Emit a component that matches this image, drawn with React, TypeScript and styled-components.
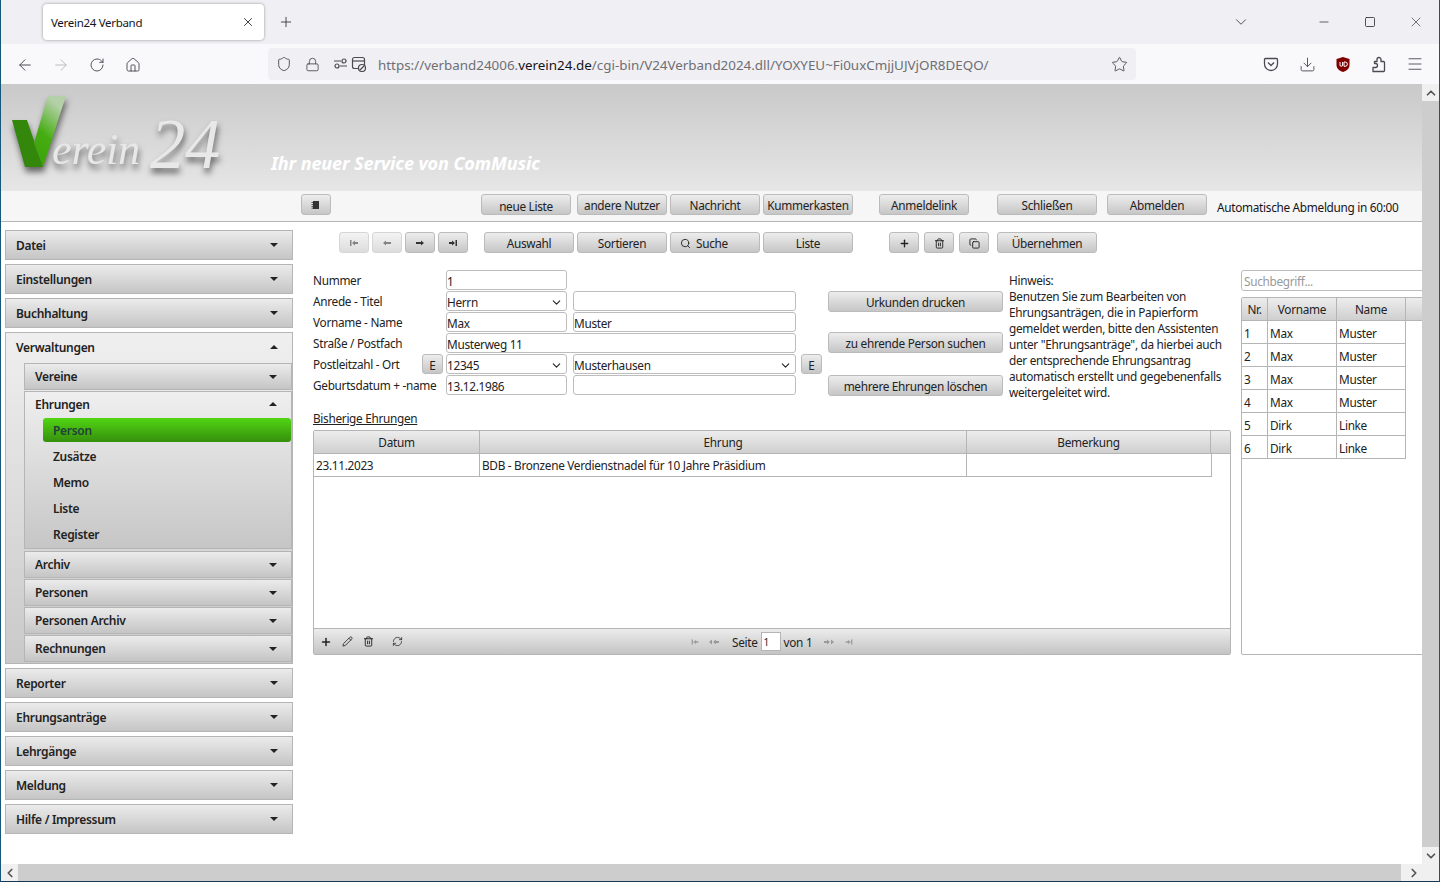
import { Fragment } from 'react';
import styled, { createGlobalStyle } from 'styled-components';
import {
  ArrowLeft, ArrowRight, RotateCw, House, Shield, Lock, Star, Download, Menu,
  ChevronDown, ChevronUp, ChevronLeft, ChevronRight, X, Plus, Minus, Square, Search, Trash2, Copy, Pencil, RefreshCw,
} from 'lucide-react';

const UI_FONT = '"Noto Sans", "Open Sans", sans-serif';
const BORDER = '#b5b5b5';

const GlobalStyle = createGlobalStyle`
  html, body { margin: 0; padding: 0; height: 100%; overflow: hidden; background: #fff; }
  body { font-family: ${UI_FONT}; font-size: 11.8px; letter-spacing: -0.3px; color: #222; }
  #root { height: 882px; }
  * { box-sizing: border-box; }
`;

const Glyph = ({ d, size = 12, color = '#333' }: { d: string; size?: number; color?: string }) => (
  <svg width={size} height={size} viewBox="0 0 12 12" fill={color}><path d={d} /></svg>
);

const GLYPHS = {
  first: 'M2 3h1.5v6H2zM4 6l3-2.500V5h3v2H7v1.500z',
  prev: 'M2 6l3-2.500V5h5v2H5v1.500z',
  next: 'M10 6L7 3.500V5H2v2h5v1.500z',
  last: 'M10 3H8.500v6H10zM8 6L5 3.500V5H2v2h3v1.500z',
  list: 'M3 2h6v8H3zM1.500 3H3v.8H1.500zM1.500 5H3v.8H1.500zM1.500 7H3v.8H1.500zM1.500 8.800H3v.8H1.500z',
  seekPrev: 'M1 6l3-2.500v5zM5 6l3-2.500v5zM8 5h3v2H8z',
  seekNext: 'M11 6L8 3.500v5zM7 6L4 3.500v5zM1 5h3v2H1z',
};

const Shell = styled.div`
  height: 882px;
  display: flex;
  flex-direction: column;
  border-left: 1px solid #17587a;
  border-right: 1px solid #17587a;
  border-bottom: 1px solid #17384f;
`;

const TabStrip = styled.div`
  height: 44px;
  flex: none;
  background: #f0f0f4;
  display: flex;
  align-items: center;
  color: #333;
`;

const Tab = styled.div`
  width: 221px;
  height: 36px;
  margin: 0 0 0 42px;
  padding: 0 9px 0 8px;
  border-radius: 4px;
  background: #fff;
  box-shadow: 0 0 3px rgba(0, 0, 0, 0.4);
  display: flex;
  align-items: center;
  justify-content: space-between;
  font-size: 11.5px;
  color: #15141a;
`;

const NewTab = styled.div`
  margin-left: 14px;
  display: flex;
`;

const WindowControls = styled.div`
  margin-left: auto;
  display: flex;
  align-items: center;
`;

const WindowIcon = styled.span<{ $w: number }>`
  width: ${(p) => p.$w}px;
  display: flex;
  justify-content: center;
`;

const NavBar = styled.div`
  height: 40px;
  flex: none;
  background: #f9f9fb;
  display: flex;
  align-items: center;
  padding-left: 6px;
  color: #4b4a50;
`;

const NavGroup = styled.div`
  display: flex;
  padding-top: 2px;
`;

const NavIcon = styled.span<{ $faded?: boolean }>`
  width: 36px;
  display: flex;
  align-items: center;
  justify-content: center;
  opacity: ${(p) => (p.$faded ? 0.35 : 1)};
`;

const UrlBar = styled.div`
  width: 868px;
  height: 32px;
  margin-left: 117px;
  border-radius: 4px;
  background: #f0f0f4;
  display: flex;
  align-items: center;
  padding: 0 8px;
  gap: 13px;
`;

const UrlText = styled.div`
  flex: 1;
  margin-left: -2px;
  padding-top: 2px;
  font-size: 13.4px;
  letter-spacing: 0;
  color: #6f6e73;
  white-space: nowrap;
  b { font-weight: 400; color: #15141a; }
`;

const NavEnd = styled.div`
  margin-left: auto;
  display: flex;
  align-items: center;
  padding-right: 6px;
`;

const Viewport = styled.div`
  flex: 1;
  min-height: 0;
  display: grid;
  grid-template-columns: 1fr 17px;
  grid-template-rows: 1fr 17px;
`;

const Page = styled.div`
  overflow: hidden;
  background: #fff;
  min-width: 0;
`;

const ScrollTrack = styled.div<{ $horizontal?: boolean }>`
  background: #f0f0f0;
  display: flex;
  flex-direction: ${(p) => (p.$horizontal ? 'row' : 'column')};
  color: #555;
`;

const ScrollThumb = styled.div<{ $horizontal?: boolean }>`
  flex: 1;
  background: #cdcdcd;
  ${(p) => p.$horizontal && 'margin-right: 4px;'}
`;

const ScrollArrow = styled.span`
  width: 17px;
  height: 17px;
  flex: none;
  display: flex;
  align-items: center;
  justify-content: center;
`;

const Corner = styled.div`
  background: #f0f0f0;
`;

const Header = styled.div`
  height: 107px;
  background: linear-gradient(#c9c9c9, #e6e6e6);
  position: relative;
`;

const Logo = styled.svg`
  position: absolute;
  left: 8px;
  top: 6px;
  filter: drop-shadow(1px 5px 3px rgba(0, 0, 0, 0.55));
`;

const Slogan = styled.div`
  position: absolute;
  left: 270px;
  top: 67px;
  font-size: 18px;
  font-weight: 700;
  font-style: italic;
  letter-spacing: -0.1px;
  color: #fff;
`;

const TopBar = styled.div`
  height: 31px;
  background: #f6f6f6;
  border-bottom: 1px solid ${BORDER};
  display: flex;
  align-items: flex-start;
  padding: 3px 0 0 300px;
`;

const Btn = styled.button<{ $w?: number; $ml?: number; $off?: boolean; $pt?: number; $pr?: number }>`
  width: ${(p) => p.$w ?? 90}px;
  height: 21px;
  flex: none;
  margin: 0 0 0 ${(p) => p.$ml ?? 3}px;
  padding: ${(p) => p.$pt ?? 1}px ${(p) => p.$pr ?? 0}px 0 0;
  border: 1px solid #bbb;
  border-radius: 3px;
  background: linear-gradient(#ededed, #c6c6c6);
  font: inherit;
  letter-spacing: inherit;
  color: ${(p) => (p.$off ? '#999' : '#222')};
  display: inline-flex;
  align-items: center;
  justify-content: center;
  gap: 5px;
  white-space: nowrap;
  opacity: ${(p) => (p.$off ? 0.6 : 1)};
`;

const LogoutNote = styled.span`
  margin: 5px 0 0 10px;
  color: #15141a;
  white-space: nowrap;
`;

const Main = styled.div`
  display: flex;
  align-items: flex-start;
`;

const Sidebar = styled.nav`
  width: 288px;
  flex: none;
  margin: 8px 0 0 4px;
  display: flex;
  flex-direction: column;
  gap: 4px;
`;

const SideHead = styled.div<{ $sub?: boolean; $open?: boolean }>`
  height: ${(p) => (p.$sub ? (p.$open ? 26 : 27) : 30)}px;
  padding: 0 14px ${(p) => (p.$open ? 2 : 0)}px 10px;
  border: ${(p) => (p.$open ? '0' : `1px solid ${BORDER}`)};
  background: ${(p) => (p.$open ? 'transparent' : 'linear-gradient(#ebebeb, #c5c5c5)')};
  display: flex;
  align-items: center;
  justify-content: space-between;
  font-size: 12px;
  font-weight: 600;
  color: #222;
`;

const Caret = styled.i<{ $up?: boolean }>`
  width: 0;
  height: 0;
  border-left: 4px solid transparent;
  border-right: 4px solid transparent;
  ${(p) => (p.$up ? 'border-bottom: 4px solid #222;' : 'border-top: 4px solid #222;')}
`;

const OpenPanel = styled.div`
  height: 332px;
  border: 1px solid ${BORDER};
  background: linear-gradient(#efefef, #c9c9c9);
`;

const SubList = styled.div`
  margin-left: 18px;
  display: flex;
  flex-direction: column;
  gap: 1px;
`;

const SubOpen = styled.div`
  height: 158px;
  margin-bottom: 1px;
  border: 1px solid ${BORDER};
  background: linear-gradient(#efefef, #c6c6c6);
`;

const LeafList = styled.div`
  padding-left: 18px;
  display: flex;
  flex-direction: column;
`;

const Leaf = styled.div<{ $active?: boolean }>`
  height: 26px;
  padding-left: 10px;
  display: flex;
  align-items: center;
  font-size: 12px;
  font-weight: 600;
  color: #222;
  ${(p) => p.$active && `
    height: 24px;
    margin-bottom: 1px;
    border-radius: 3px;
    background: linear-gradient(#52d514, #368f0c);
    color: #21413a;
  `}
`;

const Content = styled.div`
  position: relative;
  width: 1128px;
  height: 640px;
  flex: none;
  padding: 10px 0 0 20px;
`;

const Toolbar = styled.div`
  display: flex;
  padding-left: 26px;
`;

const Upper = styled.div`
  display: flex;
  align-items: flex-start;
  height: 127px;
  margin-top: 17px;
`;

const FormGrid = styled.div`
  width: 515px;
  flex: none;
  display: grid;
  grid-template-columns: 109px 24px 127px 228px 21px;
  grid-auto-rows: 21px;
`;

const Label = styled.label<{ $wide?: boolean }>`
  grid-column: ${(p) => (p.$wide ? '1 / span 2' : '1')};
  display: flex;
  align-items: center;
  height: 20px;
  color: #222;
  white-space: nowrap;
`;

const inputBase = `
  height: 20px;
  border: 1px solid #bdbdbd;
  border-radius: 3px;
  background: #fff;
  padding: 2px 0 0;
  display: flex;
  align-items: center;
  color: #222;
  white-space: nowrap;
  overflow: hidden;
`;

const Field = styled.div<{ $w: number; $col: number; $span?: number }>`
  ${inputBase}
  width: ${(p) => p.$w}px;
  grid-column: ${(p) => p.$col} / span ${(p) => p.$span ?? 1};
`;

const SelectField = styled(Field)`
  justify-content: space-between;
  padding-right: 3px;
`;

const SmallE = styled(Btn)`
  grid-column: ${(p) => (p.$ml === 5 ? 5 : 2)};
  width: 21px;
  height: 20px;
  margin: 0;
`;

const ActionColumn = styled.div`
  width: 175px;
  flex: none;
  margin: 21px 0 0 0;
  display: flex;
  flex-direction: column;
`;

const ActionBtn = styled(Btn)<{ $mt?: number }>`
  width: 175px;
  margin: ${(p) => p.$mt ?? 0}px 0 0;
`;

const Hint = styled.div`
  width: 218px;
  flex: none;
  margin: 2px 0 0 6px;
  line-height: 16px;
  color: #222;
`;

const Section = styled.div`
  margin-top: 13px;
  text-decoration: underline;
  line-height: 16px;
`;

const GridBox = styled.div`
  width: 918px;
  height: 225px;
  margin-top: 4px;
  border: 1px solid ${BORDER};
  border-radius: 2px;
  display: flex;
  flex-direction: column;
`;

const GridHead = styled.div`
  height: 23px;
  display: grid;
  grid-template-columns: 166px 487px 244px 1fr;
  background: linear-gradient(#ededed, #cfcfcf);
  border-bottom: 1px solid ${BORDER};
`;

const HeadCell = styled.div`
  display: flex;
  align-items: center;
  justify-content: center;
  border-right: 1px solid ${BORDER};
  &:last-child { border-right: 0; }
`;

const GridRow = styled.div`
  width: 898px;
  height: 23px;
  display: grid;
  grid-template-columns: 166px 487px 244px;
  border-bottom: 1px solid ${BORDER};
  border-right: 1px solid ${BORDER};
`;

const GridCell = styled.div`
  display: flex;
  align-items: center;
  padding-left: 2px;
  border-right: 1px solid ${BORDER};
  &:last-child { border-right: 0; }
`;

const GridSpace = styled.div`
  flex: 1;
`;

const Pager = styled.div`
  height: 26px;
  border-top: 1px solid ${BORDER};
  background: linear-gradient(#ececec, #c4c4c4);
  display: grid;
  grid-template-columns: 374px auto;
  align-items: center;
`;

const PagerLeft = styled.div`
  display: flex;
  align-items: center;
  padding-left: 6px;
  gap: 10px;
`;

const PagerSpin = styled.span`
  display: flex;
  margin-left: 8px;
`;

const PagerCenter = styled.div`
  display: flex;
  align-items: center;
  gap: 3px;
  margin-left: 2px;
`;

const PagerInput = styled.div`
  width: 20px;
  height: 19px;
  border: 1px solid ${BORDER};
  background: #fff;
  padding-left: 2px;
  font-size: 10px;
  line-height: 18px;
`;

const PagerGap = styled.span<{ $w: number }>`
  width: ${(p) => p.$w}px;
`;

const SidePanel = styled.aside`
  position: absolute;
  left: 948px;
  top: 48px;
  width: 181px;
  height: 385px;
  overflow: hidden;
`;

const SearchField = styled.div`
  ${inputBase}
  height: 21px;
  width: 200px;
  color: #999;
  padding: 1px 0 0 2px;
`;

const ListBox = styled.div`
  width: 200px;
  height: 358px;
  margin-top: 6px;
  border: 1px solid ${BORDER};
  border-radius: 2px;
`;

const ListTable = styled.div`
  display: grid;
  grid-template-columns: 26px 69px 69px 1fr;
  grid-auto-rows: 23px;
`;

const ListHead = styled.div`
  background: linear-gradient(#ededed, #cfcfcf);
  border-right: 1px solid ${BORDER};
  border-bottom: 1px solid ${BORDER};
  display: flex;
  align-items: center;
  justify-content: center;
  &:last-child { border-right: 0; }
`;

const ListCell = styled.div`
  border-right: 1px solid ${BORDER};
  border-bottom: 1px solid ${BORDER};
  display: flex;
  align-items: center;
  padding: 1px 0 0 2px;
`;

const ListBlank = styled.div``;

const people = [
  ['1', 'Max', 'Muster'], ['2', 'Max', 'Muster'], ['3', 'Max', 'Muster'],
  ['4', 'Max', 'Muster'], ['5', 'Dirk', 'Linke'], ['6', 'Dirk', 'Linke'],
];

const TOP_ITEMS = ['Datei', 'Einstellungen', 'Buchhaltung'];
const BOTTOM_ITEMS = ['Reporter', 'Ehrungsanträge', 'Lehrgänge', 'Meldung', 'Hilfe / Impressum'];
const SUB_ITEMS = ['Archiv', 'Personen', 'Personen Archiv', 'Rechnungen'];
const LEAVES = ['Zusätze', 'Memo', 'Liste', 'Register'];

const SideButton = ({ name }: { name: string }) => (
  <SideHead>{name}<Caret /></SideHead>
);

const SubButton = ({ name }: { name: string }) => (
  <SideHead $sub>{name}<Caret /></SideHead>
);

const App = () => {
  return (
    <Shell>
      <GlobalStyle />
      <TabStrip>
        <Tab>
          <span>Verein24 Verband</span>
          <X size={14} strokeWidth={1.4} />
        </Tab>
        <NewTab><Plus size={16} strokeWidth={1.3} /></NewTab>
        <WindowControls>
          <WindowIcon $w={46}><ChevronDown size={18} strokeWidth={1.1} /></WindowIcon>
          <WindowIcon $w={37} />
          <WindowIcon $w={46}><Minus size={14} strokeWidth={1.3} /></WindowIcon>
          <WindowIcon $w={46}><Square size={12} strokeWidth={1.7} /></WindowIcon>
          <WindowIcon $w={46}><X size={16} strokeWidth={1} /></WindowIcon>
        </WindowControls>
      </TabStrip>

      <NavBar>
        <NavGroup>
          <NavIcon><ArrowLeft size={18} strokeWidth={1.3} /></NavIcon>
          <NavIcon $faded><ArrowRight size={18} strokeWidth={1.3} /></NavIcon>
          <NavIcon><RotateCw size={16} strokeWidth={1.4} /></NavIcon>
          <NavIcon><House size={16} strokeWidth={1.4} /></NavIcon>
        </NavGroup>
        <UrlBar>
          <Shield size={16} strokeWidth={1.4} />
          <Lock size={15} strokeWidth={1.4} />
          <svg width="34" height="16" viewBox="0 0 34 16" fill="none" stroke="currentColor" strokeWidth="1.2">
            <circle cx="4" cy="10" r="2" /><circle cx="11" cy="5" r="2" />
            <path d="M1 5h7M7 10h7" />
            <rect x="19.500" y="1.500" width="12" height="11" rx="2" /><path d="M19.500 5h12" />
            <circle cx="29" cy="12" r="3.500" fill="#f0f0f4" /><path d="M27 14l4-4" />
          </svg>
          <UrlText>https://verband24006.<b>verein24.de</b>/cgi-bin/V24Verband2024.dll/YOXYEU~Fi0uxCmjjUJVjOR8DEQO/</UrlText>
          <Star size={17} strokeWidth={1.3} />
        </UrlBar>
        <NavEnd>
          <NavIcon>
            <svg width="16" height="16" viewBox="0 0 16 16" fill="none" stroke="currentColor" strokeWidth="1.300">
              <path d="M2.500 2.500h11a1 1 0 0 1 1 1V8a6.500 6.500 0 0 1-13 0V3.500a1 1 0 0 1 1-1z" />
              <path d="M5 6.500l3 3 3-3" />
            </svg>
          </NavIcon>
          <NavIcon><Download size={17} strokeWidth={1.3} /></NavIcon>
          <NavIcon>
            <svg width="16" height="17" viewBox="0 0 16 17">
              <path d="M8 1l6.500 2v6c0 3.500-3 6-6.500 7C4.500 15 1.500 12.500 1.500 9V3z" fill="#800000" />
              <path d="M5 6v3a1.300 1.300 0 0 0 2.600 0V6M9 6v4.300h1.200a2.100 2.100 0 0 0 0-4.300z" stroke="#fff" strokeWidth="1" fill="none" />
            </svg>
          </NavIcon>
          <NavIcon>
            <svg width="16" height="17" viewBox="0 0 16 17" fill="none" stroke="currentColor" strokeWidth="1.300" strokeLinejoin="round">
              <path d="M2 15.500h10.500a1 1 0 0 0 1-1V6.500a1 1 0 0 0-1-1H10V3.500a2 2 0 0 0-4 0v2H3.500v2H4.500a1.800 1.800 0 0 1 0 4H2z" />
            </svg>
          </NavIcon>
          <NavIcon><Menu size={18} strokeWidth={1.2} /></NavIcon>
        </NavEnd>
      </NavBar>

      <Viewport>
        <Page>
          <Header>
            <Logo width="230" height="100" viewBox="0 0 230 100">
              <defs>
                <linearGradient id="vRight" x1="0" y1="1" x2="0.4" y2="0">
                  <stop offset="0" stopColor="#3a9f0a" />
                  <stop offset="0.5" stopColor="#45ad10" />
                  <stop offset="1" stopColor="#b4d0a8" />
                </linearGradient>
              </defs>
              <path d="M3 30h15l16 47H16z" fill="#33880c" />
              <path d="M39 6h18L34 77 25 53z" fill="url(#vRight)" />
              <text x="43" y="74" fontFamily='"Liberation Serif", serif' fontStyle="italic" fontSize="44" fill="#e8e8e8" textLength="88" lengthAdjust="spacingAndGlyphs">erein</text>
              <text x="141" y="78" fontFamily='"Liberation Serif", serif' fontStyle="italic" fontSize="72" fill="#e8e8e8" textLength="70" lengthAdjust="spacingAndGlyphs">24</text>
            </Logo>
            <Slogan>Ihr neuer Service von ComMusic</Slogan>
          </Header>

          <TopBar>
            <Btn $w={30} $ml={0}><Glyph d={GLYPHS.list} /></Btn>
            <Btn $ml={150} $pt={3}>neue Liste</Btn>
            <Btn $ml={6}>andere Nutzer</Btn>
            <Btn>Nachricht</Btn>
            <Btn>Kummerkasten</Btn>
            <Btn $ml={26}>Anmeldelink</Btn>
            <Btn $w={100} $ml={28}>Schließen</Btn>
            <Btn $w={100} $ml={10}>Abmelden</Btn>
            <LogoutNote>Automatische Abmeldung in 60:00</LogoutNote>
          </TopBar>

          <Main>
            <Sidebar>
              {TOP_ITEMS.map((name) => <SideButton key={name} name={name} />)}
              <OpenPanel>
                <SideHead $open>Verwaltungen<Caret $up /></SideHead>
                <SubList>
                  <SubButton name="Vereine" />
                  <SubOpen>
                    <SideHead $sub $open>Ehrungen<Caret $up /></SideHead>
                    <LeafList>
                      <Leaf $active>Person</Leaf>
                      {LEAVES.map((name) => <Leaf key={name}>{name}</Leaf>)}
                    </LeafList>
                  </SubOpen>
                  {SUB_ITEMS.map((name) => <SubButton key={name} name={name} />)}
                </SubList>
              </OpenPanel>
              {BOTTOM_ITEMS.map((name) => <SideButton key={name} name={name} />)}
            </Sidebar>

            <Content>
              <Toolbar>
                <Btn $w={30} $ml={0} $off><Glyph d={GLYPHS.first} /></Btn>
                <Btn $w={30} $off><Glyph d={GLYPHS.prev} /></Btn>
                <Btn $w={30}><Glyph d={GLYPHS.next} /></Btn>
                <Btn $w={30}><Glyph d={GLYPHS.last} /></Btn>
                <Btn $ml={16}>Auswahl</Btn>
                <Btn>Sortieren</Btn>
                <Btn $pr={22}><Search size={11} strokeWidth={2} />Suche</Btn>
                <Btn>Liste</Btn>
                <Btn $w={30} $ml={36}><Plus size={11} strokeWidth={3} /></Btn>
                <Btn $w={30} $ml={5}><Trash2 size={11} strokeWidth={2} /></Btn>
                <Btn $w={30} $ml={5}><Copy size={11} strokeWidth={2} /></Btn>
                <Btn $w={100} $ml={8}>Übernehmen</Btn>
              </Toolbar>

              <Upper>
                <FormGrid>
                  <Label>Nummer</Label>
                  <Field $w={121} $col={3}>1</Field>

                  <Label>Anrede - Titel</Label>
                  <SelectField $w={121} $col={3}>Herrn<ChevronDown size={13} strokeWidth={2} /></SelectField>
                  <Field $w={223} $col={4} />

                  <Label>Vorname - Name</Label>
                  <Field $w={121} $col={3}>Max</Field>
                  <Field $w={223} $col={4}>Muster</Field>

                  <Label>Straße / Postfach</Label>
                  <Field $w={350} $col={3} $span={2}>Musterweg 11</Field>

                  <Label>Postleitzahl - Ort</Label>
                  <SmallE>E</SmallE>
                  <SelectField $w={121} $col={3}>12345<ChevronDown size={13} strokeWidth={2} /></SelectField>
                  <SelectField $w={223} $col={4}>Musterhausen<ChevronDown size={13} strokeWidth={2} /></SelectField>
                  <SmallE $ml={5}>E</SmallE>

                  <Label $wide>Geburtsdatum + -name</Label>
                  <Field $w={121} $col={3}>13.12.1986</Field>
                  <Field $w={223} $col={4} />
                </FormGrid>

                <ActionColumn>
                  <ActionBtn>Urkunden drucken</ActionBtn>
                  <ActionBtn $mt={20}>zu ehrende Person suchen</ActionBtn>
                  <ActionBtn $mt={22}>mehrere Ehrungen löschen</ActionBtn>
                </ActionColumn>

                <Hint>
                  Hinweis:<br />
                  Benutzen Sie zum Bearbeiten von Ehrungsanträgen, die in Papierform gemeldet werden, bitte den Assistenten unter "Ehrungsanträge", da hierbei auch der entsprechende Ehrungsantrag automatisch erstellt und gegebenenfalls weitergeleitet wird.
                </Hint>
              </Upper>

              <Section>Bisherige Ehrungen</Section>

              <GridBox>
                <GridHead>
                  <HeadCell>Datum</HeadCell>
                  <HeadCell>Ehrung</HeadCell>
                  <HeadCell>Bemerkung</HeadCell>
                  <HeadCell />
                </GridHead>
                <GridRow>
                  <GridCell>23.11.2023</GridCell>
                  <GridCell>BDB - Bronzene Verdienstnadel für 10 Jahre Präsidium</GridCell>
                  <GridCell />
                </GridRow>
                <GridSpace />
                <Pager>
                  <PagerLeft>
                    <Plus size={12} strokeWidth={3} />
                    <Pencil size={11} strokeWidth={1.8} />
                    <Trash2 size={11} strokeWidth={2} />
                    <PagerSpin><RefreshCw size={11} strokeWidth={1.6} /></PagerSpin>
                  </PagerLeft>
                  <PagerCenter>
                    <Glyph d={GLYPHS.first} size={10} color="#999" />
                    <PagerGap $w={2} />
                    <Glyph d={GLYPHS.seekPrev} size={12} color="#999" />
                    <PagerGap $w={6} />
                    <span>Seite</span>
                    <PagerInput>1</PagerInput>
                    <span>von 1</span>
                    <PagerGap $w={5} />
                    <Glyph d={GLYPHS.seekNext} size={12} color="#999" />
                    <PagerGap $w={3} />
                    <Glyph d={GLYPHS.last} size={10} color="#999" />
                  </PagerCenter>
                </Pager>
              </GridBox>

              <SidePanel>
                <SearchField>Suchbegriff...</SearchField>
                <ListBox>
                  <ListTable>
                    <ListHead>Nr.</ListHead>
                    <ListHead>Vorname</ListHead>
                    <ListHead>Name</ListHead>
                    <ListHead />
                    {people.map((row) => (
                      <Fragment key={row[0]}>
                        <ListCell>{row[0]}</ListCell>
                        <ListCell>{row[1]}</ListCell>
                        <ListCell>{row[2]}</ListCell>
                        <ListBlank />
                      </Fragment>
                    ))}
                  </ListTable>
                </ListBox>
              </SidePanel>
            </Content>
          </Main>
        </Page>

        <ScrollTrack>
          <ScrollArrow><ChevronUp size={14} strokeWidth={3} /></ScrollArrow>
          <ScrollThumb />
          <ScrollArrow><ChevronDown size={14} strokeWidth={3} /></ScrollArrow>
        </ScrollTrack>
        <ScrollTrack $horizontal>
          <ScrollArrow><ChevronLeft size={14} strokeWidth={3} /></ScrollArrow>
          <ScrollThumb $horizontal />
          <ScrollArrow><ChevronRight size={14} strokeWidth={3} /></ScrollArrow>
        </ScrollTrack>
        <Corner />
      </Viewport>
    </Shell>
  );
};

export default App;
